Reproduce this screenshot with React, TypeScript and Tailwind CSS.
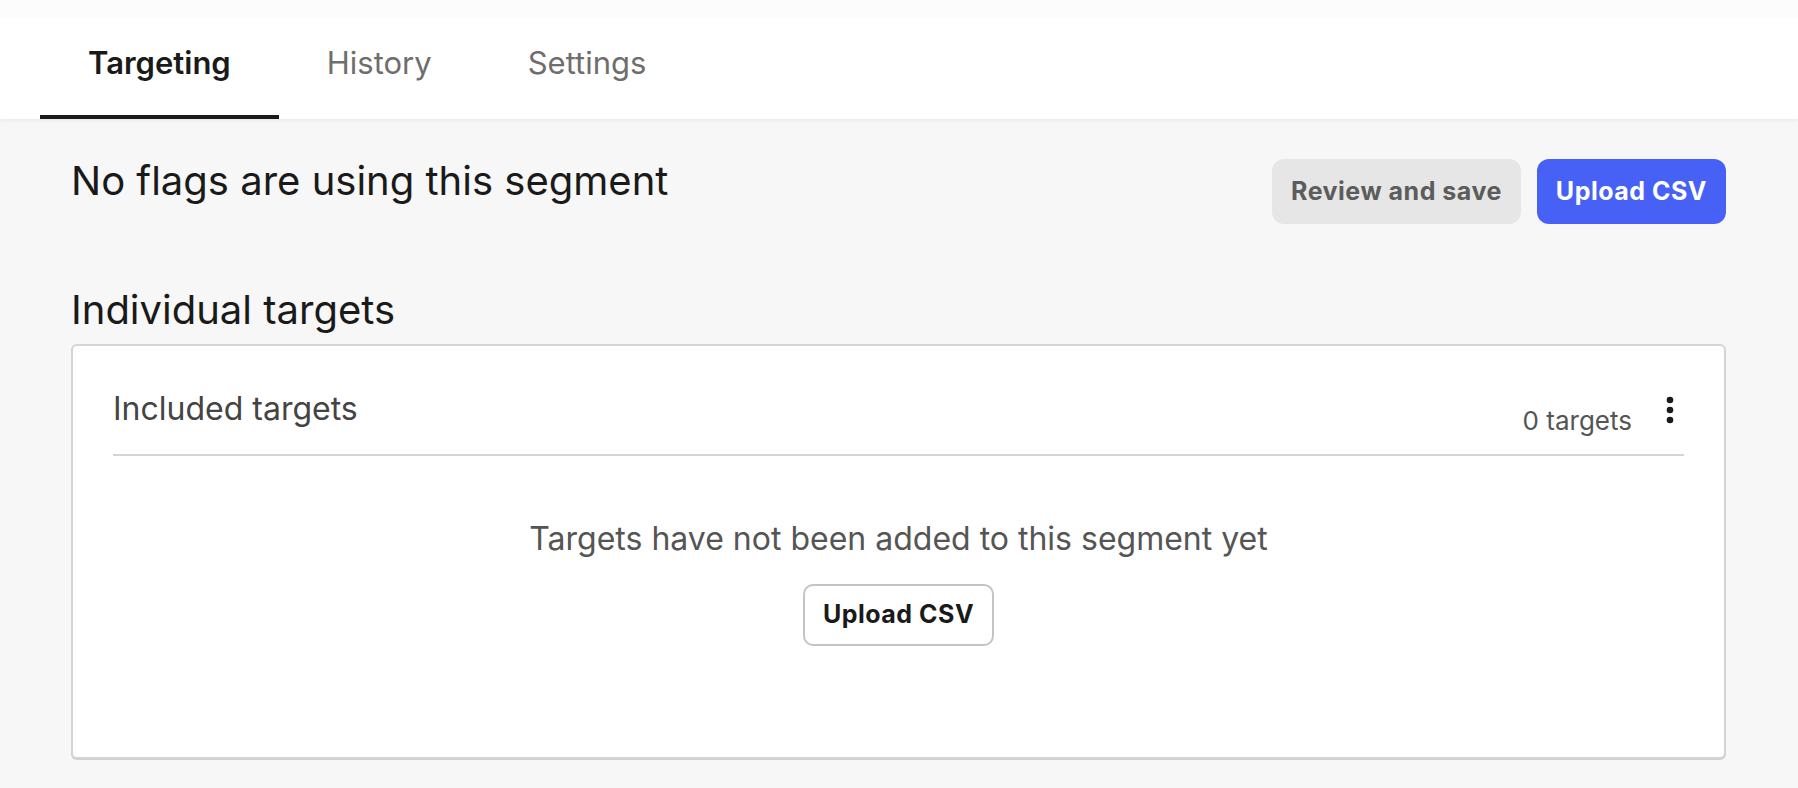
const tabs = ["Targeting", "History", "Settings"];

function Kebab() {
    return (
        <svg width="8" height="28" viewBox="0 0 8 28" className="text-[#1a1a1a]">
            <circle cx="4" cy="4" r="3.3" fill="currentColor" />
            <circle cx="4" cy="14" r="3.3" fill="currentColor" />
            <circle cx="4" cy="24" r="3.3" fill="currentColor" />
        </svg>
    );
}

export default function App() {
    return (
        <div className="min-h-screen bg-[#f7f7f7] font-['Inter',sans-serif]">
            {/* Tabs */}
            <div className="h-[119px] bg-white shadow-[0_1px_4px_rgba(0,0,0,0.08)] flex items-end pl-[40px] border-t-[18px] border-[#fcfcfc]">
                {tabs.map((t, i) => (
                    <div
                        key={t}
                        className={
                            i === 0
                                ? "h-full flex items-center px-[48px] border-b-[4px] border-[#1a1a1a] text-[31px] font-semibold text-[#1a1a1a] pb-[7px]"
                                : "h-full flex items-center px-[48px] border-b-[4px] border-transparent text-[31px] text-[#6e6e6e] pb-[7px]"
                        }
                    >
                        {t}
                    </div>
                ))}
            </div>

            <div className="pl-[71px] pr-[72px] pt-[40px]">
                <div className="flex items-start justify-between">
                    <h1 className="text-[40px] leading-[44px] text-[#1a1a1a]">No flags are using this segment</h1>
                    <div className="flex gap-[16px]">
                        <button className="h-[65px] px-[19px] rounded-[12px] bg-[#e6e6e6] text-[#5c5c5c] text-[25px] font-bold tracking-[0.5px]">
                            Review and save
                        </button>
                        <button className="h-[65px] px-[19px] rounded-[12px] bg-[#4761f6] text-white text-[25px] font-bold tracking-[0.5px]">
                            Upload CSV
                        </button>
                    </div>
                </div>

                <h2 className="mt-[64px] text-[40px] leading-[44px] text-[#1a1a1a]">Individual targets</h2>

                <div className="mt-[12px] bg-white border-2 border-[#d4d4d4] rounded-[6px] shadow-[0_1px_0_#d0d0d0] px-[40px] pt-[43px] pb-[111px]">
                    <div className="flex items-start justify-between border-b-2 border-[#d4d4d4] pb-[17px]">
                        <div className="text-[32px] leading-[40px] text-[#444]">Included targets</div>
                        <div className="flex items-start gap-[34px] pr-[10px]">
                            <div className="text-[26px] leading-[32px] text-[#555] mt-[16px]">0 targets</div>
                            <div className="mt-[7px]"><Kebab /></div>
                        </div>
                    </div>
                    <div className="flex flex-col items-center pt-[63px]">
                        <div className="text-[32px] leading-[40px] text-[#555]">Targets have not been added to this segment yet</div>
                        <button className="mt-[25px] h-[62px] px-[18px] rounded-[10px] border-2 border-[#c4c4c4] bg-white text-[25px] font-bold tracking-[0.5px] text-[#1a1a1a]">
                            Upload CSV
                        </button>
                    </div>
                </div>
            </div>
        </div>
    );
}
